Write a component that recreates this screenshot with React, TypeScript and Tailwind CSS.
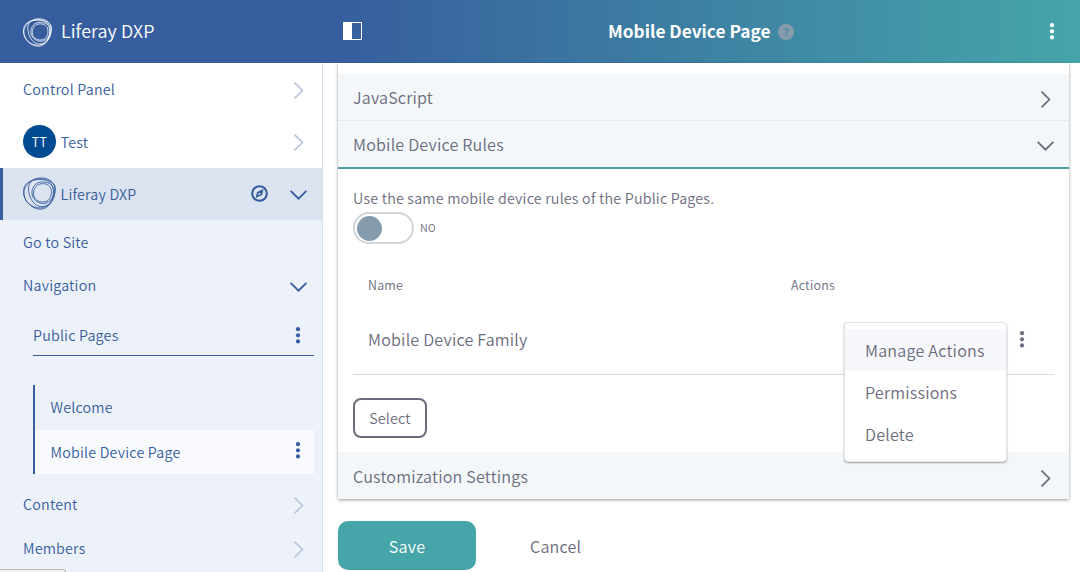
import React from "react";

type IconProps = { className?: string };

const ChevronRight = ({ className = "" }: IconProps) => (
  <svg className={className} width="17" height="17" viewBox="0 0 17 17" fill="none" stroke="currentColor" strokeWidth="1.7">
    <path d="M4.5 .6 12.4 8.5 4.5 16.4" />
  </svg>
);

const ChevronDown = ({ className = "" }: IconProps) => (
  <svg className={className} width="17" height="17" viewBox="0 0 17 17" fill="none" stroke="currentColor" strokeWidth="1.8">
    <path d="M.6 4.8 8.5 12.7 16.4 4.8" />
  </svg>
);

const Dots = ({ className = "" }: IconProps) => (
  <svg className={className} width="17" height="17" viewBox="0 0 17 17" fill="currentColor">
    <circle cx="9" cy="2.2" r="2.1" />
    <circle cx="9" cy="8.3" r="2.1" />
    <circle cx="9" cy="14.4" r="2.1" />
  </svg>
);

const Compass = ({ className = "" }: IconProps) => (
  <svg className={className} width="17" height="17" viewBox="0 0 17 17" fill="none">
    <circle cx="8.500" cy="8.500" r="7.300" stroke="currentColor" strokeWidth="2.1" />
    <path fillRule="evenodd" fill="currentColor" d="M12.500 4 11.100 9.900 4.600 13 6 7.100ZM7.700 8.100 7.200 10.200 9.300 9.200 9.600 7.900Z" />
  </svg>
);

const Rings = ({ className = "" }: IconProps) => (
  <svg className={className} viewBox="0 0 32 32" fill="none" stroke="currentColor" strokeWidth="0.85">
    <path d="M.6 14C.6 6.500 6 3.500 13 2.600 21 1.600 30.500 4 31.300 10 31.900 18 26.500 30.800 17.500 31.200 9 31.500.6 23.500.6 14Z" />
    <path d="M5.500 14C4.200 6.500 8 1 17.500.9 26 .8 31.500 6 31 13.500 30.400 23 25 29 18 28.700 11 28.500 6.700 21.500 5.500 14Z" />
    <path d="M.9 17.500C-.3 9.500 6.500 1.900 15.500 1.800 24 1.700 29 6 29.500 13.500 30 22 25 29.600 17 30 9.500 30.300 2.200 25.500.9 17.500Z" />
    <path d="M8.700 15.500C8.300 9.500 13 4.600 19 4.800 25.500 5 30.600 8 30.200 14.500 29.800 21 24.800 25.800 19 25.700 13.500 25.500 9 21 8.700 15.500Z" />
    <path d="M10.300 14.500C11 9 15 6.100 20 6.500 25.500 7 28 10.500 27.500 16 27 22 23 24.700 18 24.200 13 23.700 9.700 20 10.300 14.500Z" />
  </svg>
);

const SidebarRow = ({ label, className, chevron = "", open = false }: { label: string; className: string; chevron?: string; open?: boolean }) => (
  <div className={`flex items-center justify-between pl-[23px] pr-[15px] text-[14.3px] ${className}`}>
    <span>{label}</span>
    {open ? <ChevronDown className={chevron} /> : <ChevronRight className={`text-[#b9c6dd] ${chevron}`} />}
  </div>
);

const Sidebar = () => (
  <aside className="flex w-[323px] shrink-0 flex-col border-r border-[#d6dff0] bg-[#edf2fa] text-[#365d9d]">
    <div className="bg-white">
      <SidebarRow label="Control Panel" className="h-[53px] pb-px" chevron="mt-[3px]" />
      <div className="flex h-[52px] items-center pl-[23px] pr-[15px] text-[14.3px]">
        <div className="-mt-px flex size-[33px] items-center justify-center rounded-full bg-[#004b91] text-[12.5px] text-white">TT</div>
        <span className="ml-[4.5px]">Test</span>
        <ChevronRight className="ml-auto mt-px text-[#b9c6dd]" />
      </div>
    </div>
    <div className="flex h-[52px] shrink-0 items-center border-l-[3px] border-[#365d9d] bg-[#dbe3f0] pl-5 pr-[15px] text-[14.3px]">
      <Rings className="-mt-px size-[33px]" />
      <span className="ml-[4.5px]">Liferay DXP</span>
      <Compass className="ml-auto mr-[22.500px] -mt-0.5" />
      <ChevronDown className="mt-px" />
    </div>
    <div className="flex h-11 shrink-0 items-center pl-[23px] text-[14.3px]">Go to Site</div>
    <SidebarRow label="Navigation" className="h-[43px] shrink-0 pb-0.5" chevron="mt-[3px]" open />
    <div className="ml-[33px] mr-2 mt-[9px] flex h-10 shrink-0 items-center justify-between border-b border-[#365d9d] pb-0.5 pr-2 text-[14.3px]">
      <span>Public Pages</span>
      <Dots className="mt-px" />
    </div>
    <div className="ml-[33px] mr-2 mt-[29px] shrink-0 border-l-2 border-[#365d9d] text-[14.3px]">
      <div className="flex h-[45px] items-center pb-0.5 pl-[15.500px]">Welcome</div>
      <div className="flex h-11 items-center justify-between bg-[#f8fafe] pl-[15.500px] pr-2">
        <span>Mobile Device Page</span>
        <Dots className="-mt-1" />
      </div>
    </div>
    <SidebarRow label="Content" className="mt-2 h-11 shrink-0" chevron="mt-[3px]" />
    <SidebarRow label="Members" className="h-[43px] shrink-0" chevron="mt-[3px]" />
    <div className="h-1 w-[66px] shrink-0 rounded-tr-[3px] border-r border-t border-[#bbb] bg-[#f2f2f2]" />
  </aside>
);

const MenuItem = ({ label, active = false }: { label: string; active?: boolean }) => (
  <div className={`flex h-[42px] items-center pl-5 text-[16.1px] tracking-[0.22px] ${active ? "bg-[#f7f8fb] pb-px" : ""}`}>{label}</div>
);

const RulesBody = () => (
  <div className="flex h-[283px] flex-col bg-white px-[15px] pt-[19px]">
    <p className="h-6 text-[14.3px] leading-5">Use the same mobile device rules of the Public Pages.</p>
    <div className="flex items-center">
      <div className="flex h-8 w-[61px] items-center rounded-full border-2 border-[#d0d5d8] pl-0.5">
        <div className="size-[25px] rounded-full bg-[#869cad]" />
      </div>
      <span className="ml-[6px] text-[10.7px]">NO</span>
    </div>
    <div className="mt-[31px] flex h-5 items-center px-[15px] text-[12.500px]">
      <span className="w-[423px]">Name</span>
      <span>Actions</span>
    </div>
    <div className="relative mt-2.5 flex h-[70px] items-center justify-between border-b border-[#d8d9de] pb-px pl-[15px] pr-6 text-[16.1px]">
      <span>Mobile Device Family</span>
      <Dots />
      <div className="absolute right-[47px] top-[17px] z-10 h-[140px] w-[163px] rounded border border-[#e4e5ea] bg-white pt-1.5 shadow-[0_1px_2px_rgba(0,0,0,0.35)]">
        <MenuItem label="Manage Actions" active />
        <MenuItem label="Permissions" />
        <MenuItem label="Delete" />
      </div>
    </div>
    <button className="mt-[23px] h-10 w-[74px] rounded-lg border-2 border-[#6b6c7e] text-[14.3px] tracking-[0.18px]">Select</button>
  </div>
);

const PanelHead = ({ label, className, open = false }: { label: string; className: string; open?: boolean }) => (
  <div className={`flex items-center justify-between bg-[#f3f7fa] pl-[15px] pr-[15px] text-[16.1px] ${className}`}>
    <span>{label}</span>
    {open ? <ChevronDown className="mt-0.5" /> : <ChevronRight className="mt-[5px]" />}
  </div>
);

export default function App() {
  return (
    <div className="flex h-[572px] w-[1080px] flex-col overflow-hidden bg-white font-['Noto_Sans_CJK_SC_DemiLight','Noto_Sans_CJK_SC','Noto_Sans',sans-serif] leading-5 tracking-[0.2px] text-[#6b6c7e]">
      <header className="flex h-[63px] shrink-0 text-white">
        <div className="flex w-[322px] items-center bg-[#365d9d] pl-[23px]">
          <Rings className="mt-0.5 size-[29px]" />
          <span className="-mt-[3px] ml-[9px] text-[17.900px] tracking-[0.1px]">Liferay DXP</span>
        </div>
        <div className="flex flex-1 items-center bg-linear-[to_right,#365d9d,#45a5a9] pl-[21px] pr-5">
          <svg className="-mt-px" width="19" height="18" viewBox="0 0 19 18">
            <rect x=".5" y=".5" width="18" height="17" fill="none" stroke="currentColor" />
            <rect width="9" height="18" fill="currentColor" />
          </svg>
          <div className="flex flex-1 items-center pl-[246px]">
            <span className="-mt-px font-['Noto_Sans_CJK_SC'] text-[17.300px] font-bold tracking-normal">Mobile Device Page</span>
            <span className="ml-2 mt-px flex size-4 items-center justify-center rounded-full bg-[#869cad] text-[10px] font-bold text-[#4187a6]">?</span>
          </div>
          <Dots />
        </div>
      </header>
      <div className="flex min-h-0 flex-1">
        <Sidebar />
        <main className="flex flex-1 flex-col pl-[15px] pr-[11px]">
          <section className="h-[436px] shrink-0 bg-white pt-[11px] shadow-[0_1px_3px_rgba(0,0,0,0.4)]">
            <PanelHead label="JavaScript" className="h-[47px] border-b border-[#e4e9ee]" />
            <PanelHead label="Mobile Device Rules" className="h-12 border-b-2 border-[#4b9b9f]" open />
            <RulesBody />
            <PanelHead label="Customization Settings" className="h-[47px]" />
          </section>
          <div className="mt-[22px] flex shrink-0">
            <button className="h-[49px] w-[138px] rounded-[10px] bg-[#45a5a9] text-[16.1px] tracking-[0.3px] text-white">Save</button>
            <button className="ml-[54px] text-[16.1px] tracking-[0.2px]">Cancel</button>
          </div>
        </main>
      </div>
    </div>
  );
}
